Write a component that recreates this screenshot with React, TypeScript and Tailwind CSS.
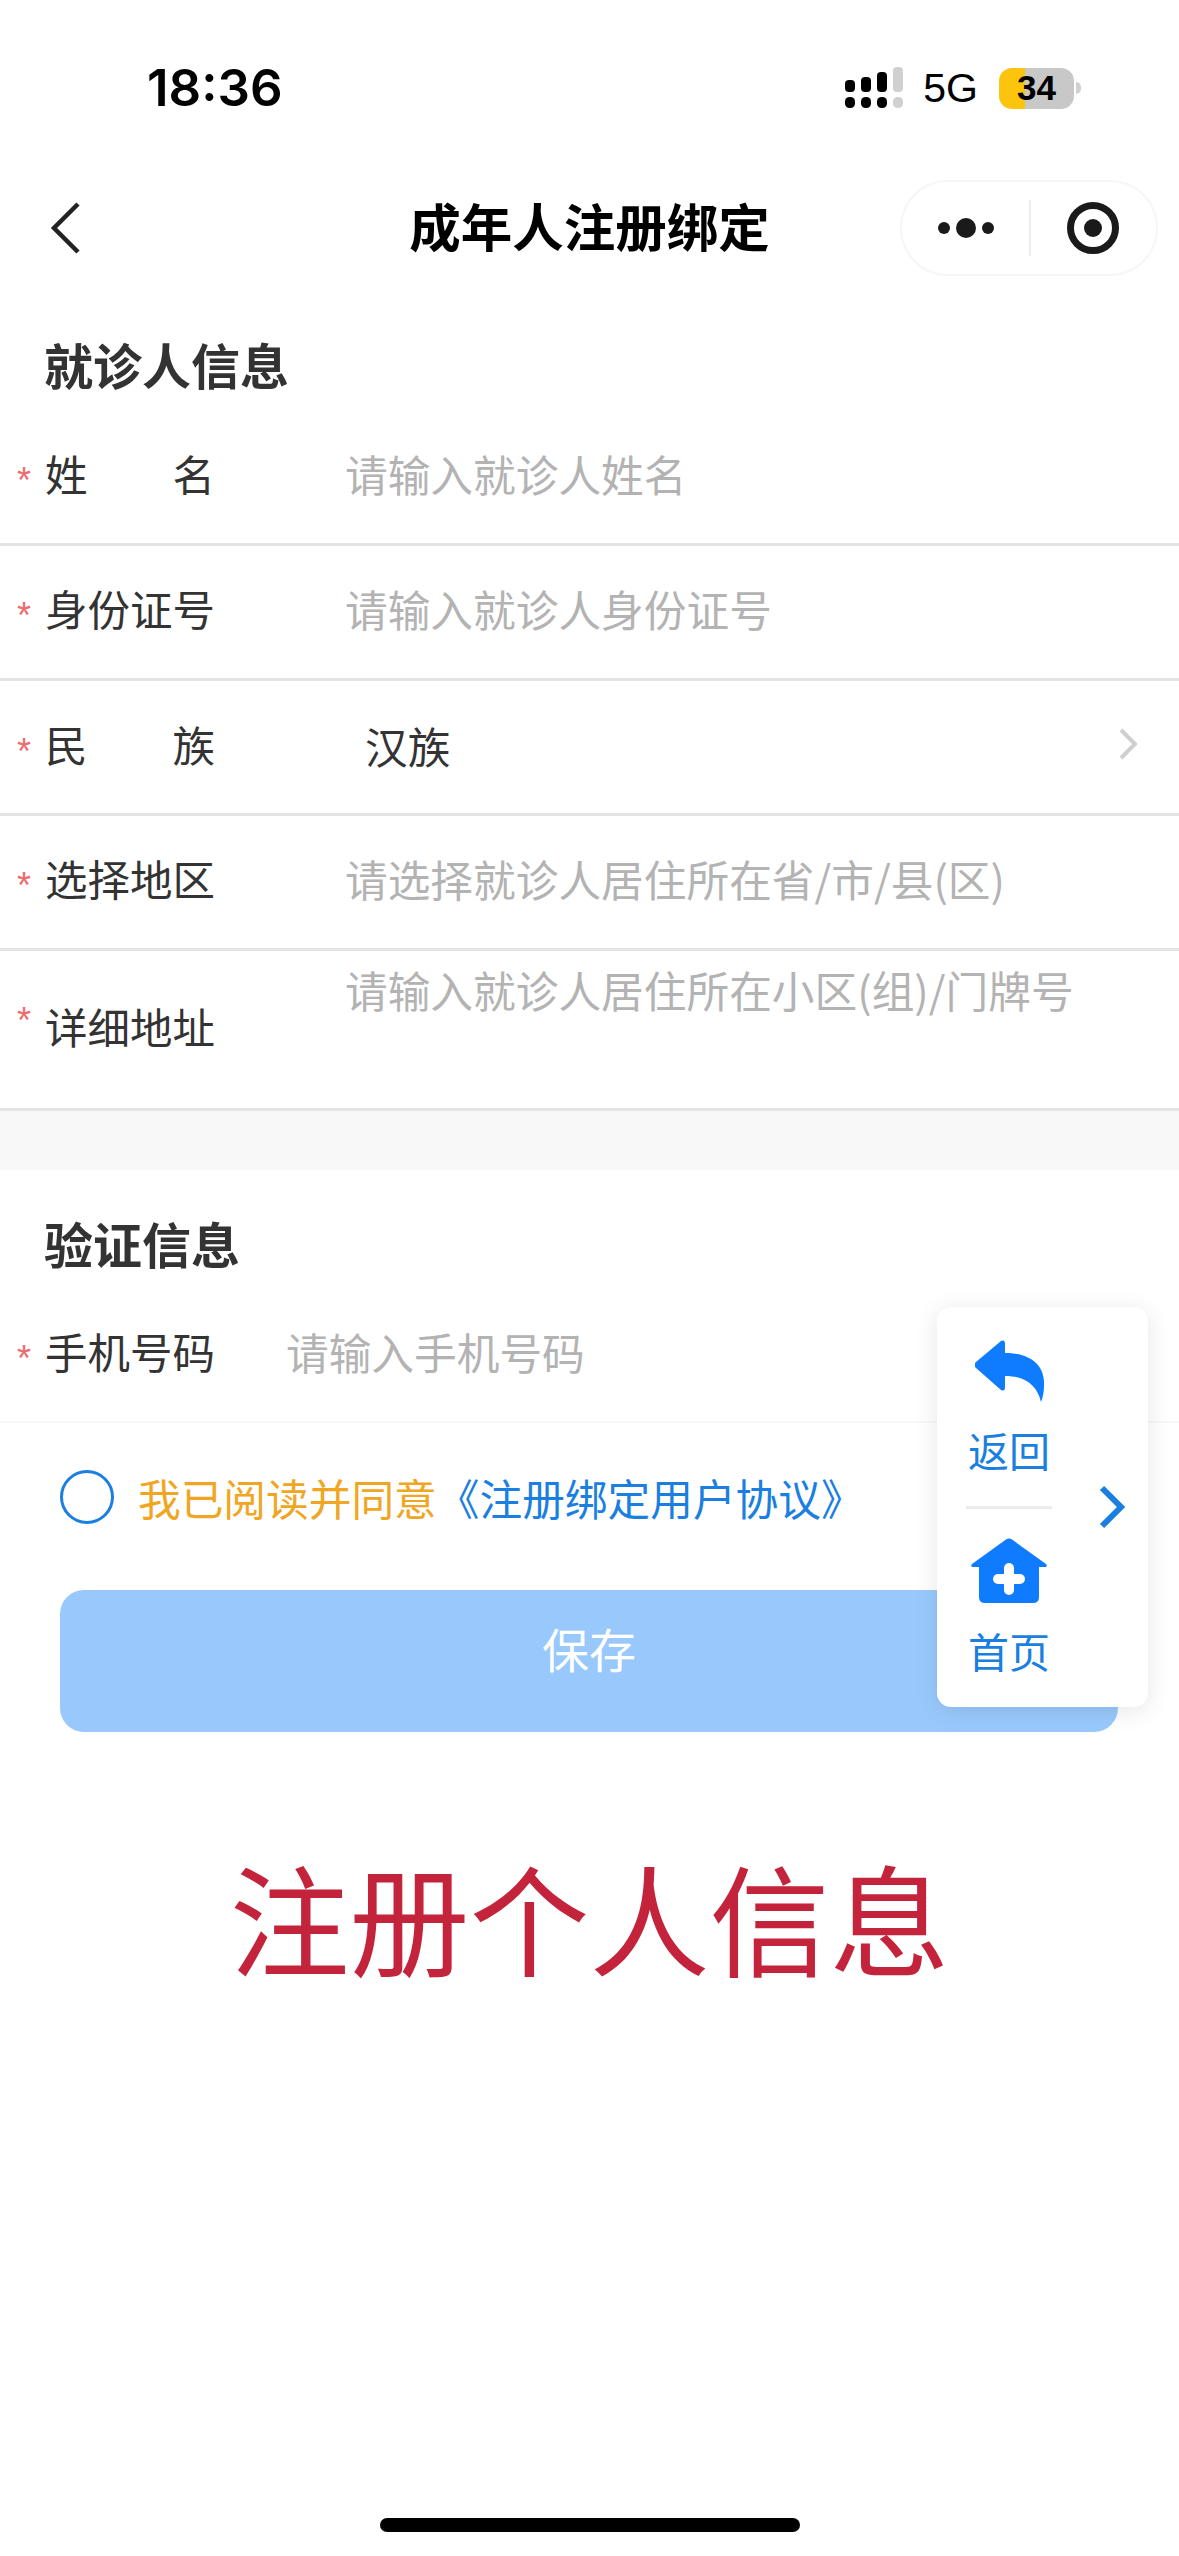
const cjk = "font-['Noto_Sans_CJK_SC','Liberation_Sans',sans-serif]";

function Label({ chars }: { chars: string[] }) {
  return (
    <div className="flex w-[170px] justify-between text-[42.5px] leading-[42px] whitespace-nowrap text-[#333333]">
      {chars.map((c) => (
        <span key={c}>{c}</span>
      ))}
    </div>
  );
}

function Star() {
  return (
    <div className="w-[28px] pt-[15px] font-['Liberation_Sans',sans-serif] text-[36px] leading-[34px] text-[#ee6b6e]">*</div>
  );
}

function Row({ chars, placeholder }: { chars: string[]; placeholder: string }) {
  return (
    <div className="box-border flex h-[135px] items-center border-b-[3px] border-[#e4e4e4] pb-[8px] pl-[17px]">
      <Star />
      <Label chars={chars} />
      <span className="ml-[130px] text-[42.7px] leading-[42px] text-[#b3b3b3]">{placeholder}</span>
    </div>
  );
}

function Signal() {
  return (
    <svg width="60" height="42" viewBox="0 0 60 42">
      <rect x="0" y="13" width="10" height="12" rx="4" fill="#000" />
      <rect x="16" y="10" width="10" height="15" rx="4" fill="#000" />
      <rect x="32" y="5" width="10" height="20" rx="4" fill="#000" />
      <rect x="48" y="0" width="10" height="25" rx="4" fill="#d0d0d0" />
      <rect x="0" y="30" width="10" height="11" rx="4.5" fill="#000" />
      <rect x="16" y="30" width="10" height="11" rx="4.5" fill="#000" />
      <rect x="32" y="30" width="10" height="11" rx="4.5" fill="#000" />
      <rect x="48" y="30" width="10" height="11" rx="4.5" fill="#d0d0d0" />
    </svg>
  );
}

export default function App() {
  return (
    <div className={`relative h-[2556px] w-full overflow-hidden bg-white ${cjk}`}>
      {/* status bar */}
      <div className="flex h-[180px] items-start pt-[67px] font-['Liberation_Sans',sans-serif] text-black">
        <span className="ml-[147px] font-['Inter',sans-serif] text-[51px] leading-[42px] font-semibold">18:36</span>
        <div className="mr-[98px] ml-auto flex items-center">
          <Signal />
          <span className="ml-[18px] text-[41px] leading-[42px]">5G</span>
          <div className="ml-[21px] flex h-[41px] w-[75px] items-center justify-center rounded-[13px] bg-[linear-gradient(90deg,#fcc40d_35%,#c8c8c8_35%)] text-[35px] font-bold">
            34
          </div>
          <div className="ml-[2px] h-[12px] w-[5px] rounded-r-full bg-[#d0d0d0]" />
        </div>
      </div>

      {/* nav bar */}
      <div className="grid h-[95px] grid-cols-[1fr_auto_1fr] items-center">
        <svg className="ml-[50px]" width="32" height="54" viewBox="0 0 32 54">
          <path d="M28 3 L4 27 L28 51" fill="none" stroke="#222" strokeWidth="4.5" />
        </svg>
        <span className="pb-[6px] text-[51.5px] leading-[60px] font-bold text-black">成年人注册绑定</span>
        <div className="mr-[21px] flex h-[96px] w-[258px] items-center justify-self-end rounded-full border-2 border-[#f6f6f6]">
          <svg className="ml-[30px]" width="68" height="24" viewBox="0 0 68 24">
            <circle cx="12" cy="12" r="6" fill="#1a1a1a" />
            <circle cx="34" cy="12" r="10" fill="#1a1a1a" />
            <circle cx="56" cy="12" r="6" fill="#1a1a1a" />
          </svg>
          <div className="ml-[29px] h-[56px] w-[2px] bg-[#eeeeee]" />
          <svg className="ml-[36px]" width="52" height="52" viewBox="0 0 52 52">
            <circle cx="26" cy="26" r="22.5" fill="none" stroke="#1a1a1a" strokeWidth="7" />
            <circle cx="26" cy="26" r="9" fill="#1a1a1a" />
          </svg>
        </div>
      </div>

      {/* patient info */}
      <div className="h-[136px] pt-[59px] pl-[44px] text-[49px] leading-[60px] font-bold text-[#333333]">就诊人信息</div>
      <Row chars={["姓", "名"]} placeholder="请输入就诊人姓名" />
      <Row chars={["身份证号"]} placeholder="请输入就诊人身份证号" />
      <div className="box-border flex h-[135px] items-center border-b-[3px] border-[#e4e4e4] pb-[6px] pl-[17px]">
        <Star />
        <Label chars={["民", "族"]} />
        <span className="mt-[2px] ml-[150px] text-[42.7px] leading-[42px] text-[#333333]">汉族</span>
        <svg className="mr-[38px] ml-auto" width="24" height="36" viewBox="0 0 24 36">
          <path d="M4 4 L18 18 L4 32" fill="none" stroke="#cfcfcf" strokeWidth="4" />
        </svg>
      </div>
      <Row chars={["选择地区"]} placeholder="请选择就诊人居住所在省/市/县(区)" />
      <div className="box-border flex h-[160px] items-start border-b-[3px] border-[#e4e4e4] pl-[17px]">
        <div className="mt-[38px]">
          <Star />
        </div>
        <div className="mt-[54px]">
          <Label chars={["详细地址"]} />
        </div>
        <span className="mt-[17px] ml-[130px] text-[42.7px] leading-[42px] text-[#b3b3b3]">
          请输入就诊人居住所在小区(组)/门牌号
        </span>
      </div>
      <div className="h-[59px] bg-[#f8f8f8]" />

      {/* verification */}
      <div className="h-[118px] pt-[43px] pl-[44px] text-[49px] leading-[60px] font-bold text-[#333333]">验证信息</div>
      <div className="box-border flex h-[135px] items-center border-b-2 border-[#f8f8f8] pb-[7px] pl-[17px]">
        <Star />
        <Label chars={["手机号码"]} />
        <span className="ml-[71px] text-[42.7px] leading-[42px] text-[#b3b3b3]">请输入手机号码</span>
      </div>

      {/* agreement */}
      <div className="mt-[47px] flex items-center pl-[60px]">
        <div className="h-[54px] w-[54px] rounded-full border-[3px] border-[#1a7fe0]" />
        <span className="ml-[24px] text-[42.7px] leading-[54px] text-[#f0a623]">我已阅读并同意</span>
        <span className="text-[42.7px] leading-[54px] text-[#1a7fe0]">《注册绑定用户协议》</span>
      </div>

      <div className="mx-[60px] mt-[66px] flex h-[142px] w-[1058px] items-center justify-center rounded-[24px] bg-[#99c9fc] pb-[26px] text-[47px] text-white">
        保存
      </div>

      <div className="mt-[124px] text-center text-[120px] leading-[120px] text-[#c4243b]">注册个人信息</div>

      {/* floating menu */}
      <div className="absolute top-[1307px] left-[937px] flex h-[400px] w-[211px] items-center rounded-[14px] bg-white shadow-[0_4px_24px_rgba(0,0,0,0.10)]">
        <div className="flex h-full w-[144px] flex-col items-center pt-[33px] text-[41px] leading-[42px] text-[#1a7fe0]">
          <svg width="69" height="62" viewBox="0 0 69 62">
            <path
              d="M1 22 L26 1 Q30 -1 30 4 V13 C55 13 70 25 69 45 Q69 55 66 62 C62 45 50 36 30 36 V47 Q30 52 26 50 L1 28 Q-2 25 1 22 Z"
              fill="#0f7cff"
            />
          </svg>
          <span className="mt-[26px]">返回</span>
          <div className="mt-[36px] h-[3px] w-[86px] bg-[#ececec]" />
          <svg className="mt-[29px]" width="78" height="65" viewBox="0 0 78 65">
            <path
              d="M36 1.5 Q39 -0.5 42 1.5 L76 26 Q78 29 75 29 H69 V59 Q69 65 63 65 H15 Q9 65 9 59 V29 H3 Q0 29 2 26 Z"
              fill="#0f7cff"
            />
            <rect x="23" y="36" width="32" height="10" rx="5" fill="#fff" />
            <rect x="34" y="25" width="10" height="32" rx="5" fill="#fff" />
          </svg>
          <span className="mt-[26px]">首页</span>
        </div>
        <svg className="ml-[16px]" width="30" height="46" viewBox="0 0 30 46">
          <path d="M5 4 L24 23 L5 42" fill="none" stroke="#1a7fe0" strokeWidth="6" />
        </svg>
      </div>

      {/* home indicator */}
      <div className="absolute top-[2518px] left-[380px] h-[14px] w-[420px] rounded-full bg-black" />
    </div>
  );
}
